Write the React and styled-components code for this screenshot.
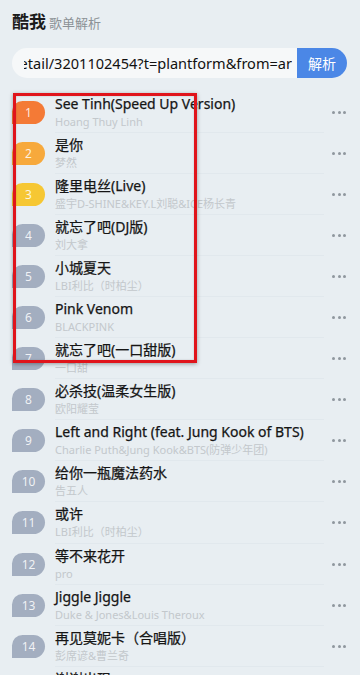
import React from "react";
import styled, { createGlobalStyle } from "styled-components";

const Global = createGlobalStyle`
  html, body { margin: 0; padding: 0; background: #e8eef2; }
  body { width: 360px; height: 675px; overflow: hidden; font-family: "Noto Sans", Roboto, "Noto Sans CJK SC", sans-serif; }
  * { box-sizing: border-box; }
`;

const Page = styled.div`
  position: relative;
  width: 360px;
  height: 675px;
  overflow: hidden;
  background: #e8eef2;
`;

const Header = styled.div`
  display: flex;
  align-items: baseline;
  gap: 3px;
  padding: 8px 12px 0;
  height: 40px;
`;

const Brand = styled.span`
  font-size: 17px;
  font-weight: 700;
  color: #1c1c1c;
  font-family: "Noto Sans CJK SC", sans-serif;
`;

const Sub = styled.span`
  font-size: 13px;
  color: #8c9296;
  font-family: "Noto Sans CJK SC", sans-serif;
`;

const SearchBar = styled.div`
  display: flex;
  margin: 8px 13px 0 12px;
  height: 30px;
`;

const Field = styled.div`
  flex: 1;
  min-width: 0;
  display: flex;
  align-items: center;
  background: #f6f8f9;
  border-radius: 15px 0 0 15px;
  padding: 0 5px 0 12px;
`;

const Clip = styled.div`
  flex: 1;
  min-width: 0;
  display: flex;
  justify-content: flex-end;
  overflow: hidden;
`;

const FieldText = styled.span`
  flex: none;
  white-space: nowrap;
  font-size: 14.55px;
  color: #111;
  font-family: "Noto Sans", sans-serif;
`;

const Button = styled.div`
  width: 50px;
  display: flex;
  align-items: center;
  justify-content: center;
  background: #4b87e6;
  color: #fff;
  font-size: 14px;
  border-radius: 0 15px 15px 0;
  font-family: "Noto Sans CJK SC", sans-serif;
`;

const List = styled.div`
  margin-top: 14px;
  display: flex;
  flex-direction: column;
`;

const Row = styled.div`
  display: flex;
  align-items: center;
  height: 41.05px;
  padding: 0 14px 0 12px;
`;

const Badge = styled.div`
  width: 33px;
  height: 23px;
  flex: none;
  border-radius: 11px 12px 12px 0;
  background: ${(p) => p.$color};
  color: rgba(255,255,255,0.85);
  font-size: 12px;
  display: flex;
  align-items: center;
  justify-content: center;
  font-family: "Noto Sans", sans-serif;
`;

const Info = styled.div`
  flex: 1;
  min-width: 0;
  margin-left: 10px;
  align-self: stretch;
  display: flex;
  flex-direction: column;
  justify-content: center;
  border-bottom: 1px solid #e1e8ed;
`;

const Title = styled.div`
  font-size: 14px;
  line-height: 18px;
  color: #151515;
  font-weight: 400;
  white-space: nowrap;
  font-family: "Noto Sans", "Noto Sans CJK SC", sans-serif;
  -webkit-text-stroke: 0.25px #151515;
`;

const Artist = styled.div`
  font-size: 11px;
  line-height: 15px;
  margin-top: 1px;
  color: #c3c8cc;
  white-space: nowrap;
  font-family: "Noto Sans", "Noto Sans CJK SC", sans-serif;
`;

const More = styled.div`
  display: flex;
  gap: 2.5px;
  margin-left: 8px;
`;

const Dot = styled.span`
  width: 3px;
  height: 3px;
  border-radius: 50%;
  background: #8f979e;
`;

const Highlight = styled.div`
  position: absolute;
  left: 13px;
  top: 93px;
  width: 184px;
  height: 270px;
  border: 3px solid #e0141b;
  box-shadow: 0 1px 4px rgba(0,0,0,0.35), inset 0 0 2px rgba(0,0,0,0.2);
  pointer-events: none;
`;

const songs = [
  ["See Tinh(Speed Up Version)", "Hoang Thuy Linh"],
  ["是你", "梦然"],
  ["隆里电丝(Live)", "盛宇D-SHINE&KEY.L刘聪&ICE杨长青"],
  ["就忘了吧(DJ版)", "刘大拿"],
  ["小城夏天", "LBI利比（时柏尘）"],
  ["Pink Venom", "BLACKPINK"],
  ["就忘了吧(一口甜版)", "一口甜"],
  ["必杀技(温柔女生版)", "欧阳耀莹"],
  ["Left and Right (feat. Jung Kook of BTS)", "Charlie Puth&Jung Kook&BTS(防弹少年团)"],
  ["给你一瓶魔法药水", "告五人"],
  ["或许", "LBI利比（时柏尘）"],
  ["等不来花开", "pro"],
  ["Jiggle Jiggle", "Duke & Jones&Louis Theroux"],
  ["再见莫妮卡（合唱版）", "彭席谚&曹兰奇"],
  ["谢谢出现", "Deep"],
];

const colorFor = (i) =>
  i === 0 ? "#f47a36" : i === 1 ? "#f7a93c" : i === 2 ? "#f6c733" : "#a3aec0";

export default function App() {
  return (
    <Page>
      <Global />
      <Header>
        <Brand>酷我</Brand>
        <Sub>歌单解析</Sub>
      </Header>
      <SearchBar>
        <Field>
          <Clip>
            <FieldText>https://m.kuwo.cn/newh5app/playlist_detail/3201102454?t=plantform&amp;from=ar</FieldText>
          </Clip>
        </Field>
        <Button>解析</Button>
      </SearchBar>
      <List>
        {songs.map(([t, a], i) => (
          <Row key={i}>
            <Badge $color={colorFor(i)}>{i + 1}</Badge>
            <Info>
              <Title>{t}</Title>
              <Artist>{a}</Artist>
            </Info>
            <More>
              <Dot />
              <Dot />
              <Dot />
            </More>
          </Row>
        ))}
      </List>
      <Highlight />
    </Page>
  );
}
